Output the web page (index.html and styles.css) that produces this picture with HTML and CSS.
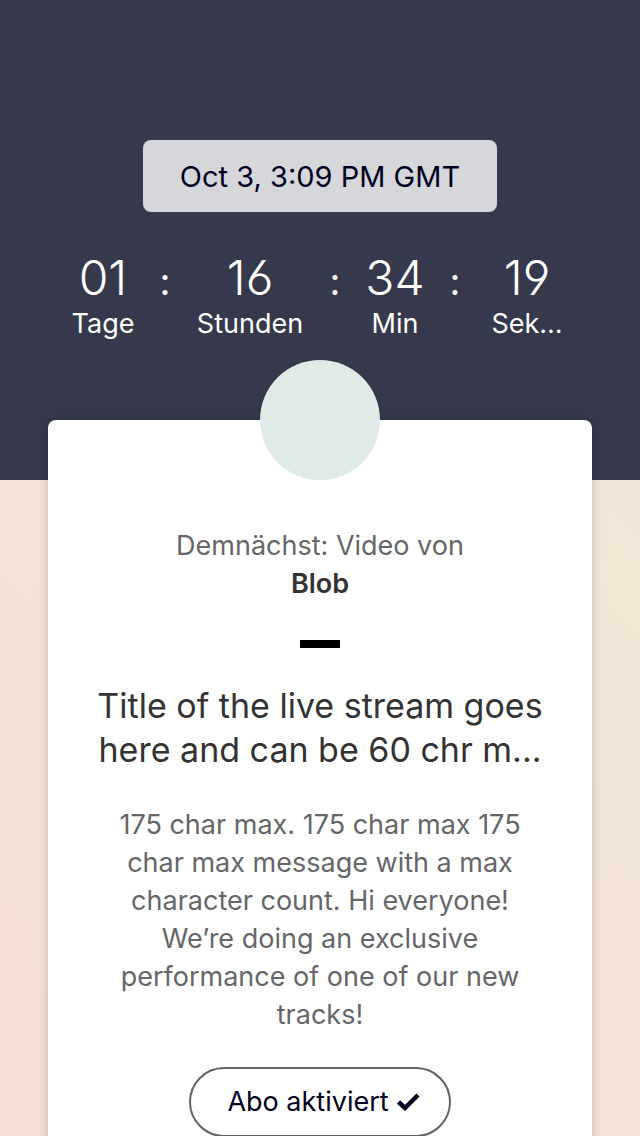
FILE: index.html
```html
<!DOCTYPE html>
<html lang="de">
<head>
<meta charset="utf-8">
<meta name="viewport" content="width=device-width, initial-scale=1">
<title>Blob</title>
<link rel="stylesheet" href="styles.css">
</head>
<body>
<main class="page">
  <header class="hero">
    <time class="date">Oct 3, 3:09 PM GMT</time>
    <div class="countdown">
      <div class="unit"><span class="value">01</span><span class="label">Tage</span></div>
      <span class="colon">:</span>
      <div class="unit"><span class="value">16</span><span class="label">Stunden</span></div>
      <span class="colon">:</span>
      <div class="unit"><span class="value">34</span><span class="label">Min</span></div>
      <span class="colon">:</span>
      <div class="unit"><span class="value">19</span><span class="label">Sek...</span></div>
    </div>
  </header>
  <section class="card">
    <div class="avatar"></div>
    <p class="intro">Demnächst: Video von<br><strong>Blob</strong></p>
    <div class="rule"></div>
    <h1 class="title">Title of the live stream goes<br>here and can be 60 chr m...</h1>
    <p class="message">175 char max. 175 char max 175<br>char max message with a max<br>character count. Hi everyone!<br>We’re doing an exclusive<br>performance of one of our new<br>tracks!</p>
    <button class="subscribe" type="button">Abo aktiviert
      <svg class="check" viewBox="0 0 24 20" aria-hidden="true"><path d="M2.500 10 9 16 22 3" fill="none" stroke="currentColor" stroke-width="4.500"/></svg>
    </button>
  </section>
</main>
</body>
</html>
```
FILE: styles.css
```css
* {
  box-sizing: border-box;
}

body {
  margin: 0;
  font-family: Inter, "Liberation Sans", sans-serif;
  font-size: 27px;
  line-height: 38px;
  color: #666669;
}

.page {
  height: 100vh;
  overflow: hidden;
  background: linear-gradient(225deg, #f2e8d6 20%, #f4e3d5 70%, #f4e0d3 100%);
}

.hero {
  display: flex;
  flex-direction: column;
  align-items: center;
  height: 480px;
  padding: 140px 48px 0;
  background: #36384c;
  color: #fff;
}

.date {
  padding: 18px 37px 16px;
  border-radius: 8px;
  background: #d6d7db;
  color: #00001e;
  font-size: 29px;
}

.countdown {
  display: grid;
  grid-template-columns: 110fr 14fr 156fr 14fr 106fr 14fr 130fr;
  align-items: start;
  width: 100%;
  margin-top: 40px;
  text-align: center;
}

.unit {
  display: flex;
  flex-direction: column;
}

.value {
  font-size: 48px;
  font-weight: 300;
  line-height: 52px;
  font-feature-settings: "cv03", "cv04";
}

.label {
  padding-top: 1px;
}

.colon {
  font-size: 38px;
  font-weight: 400;
  line-height: 58px;
}

.card {
  position: relative;
  display: flex;
  flex-direction: column;
  align-items: center;
  margin: -60px 48px 0;
  padding: 107px 24px 48px;
  border-radius: 8px;
  background: #fff;
  box-shadow: 0 0 10px rgba(0, 0, 0, 0.2);
  text-align: center;
}

.avatar {
  position: absolute;
  top: -60px;
  left: calc(50% - 60px);
  width: 120px;
  height: 120px;
  border-radius: 50%;
  background: #e0eae7;
}

.intro {
  margin: 0;
}

.intro strong {
  color: #333;
  font-weight: 600;
}

.rule {
  width: 40px;
  height: 8px;
  margin: 37px 0 36px;
  background: #000;
}

.title {
  margin: 0;
  color: #333;
  font-size: 34px;
  font-weight: 400;
  line-height: 44px;
}

.message {
  margin: 34px 0 33px;
}

.subscribe {
  display: flex;
  flex-shrink: 0;
  align-items: center;
  gap: 7px;
  height: 70px;
  padding: 0 29px 0 36px;
  border: 2px solid #626266;
  border-radius: 35px;
  background: #fff;
  color: #00001e;
  font: inherit;
}

.check {
  width: 24px;
  height: 20px;
}
```
